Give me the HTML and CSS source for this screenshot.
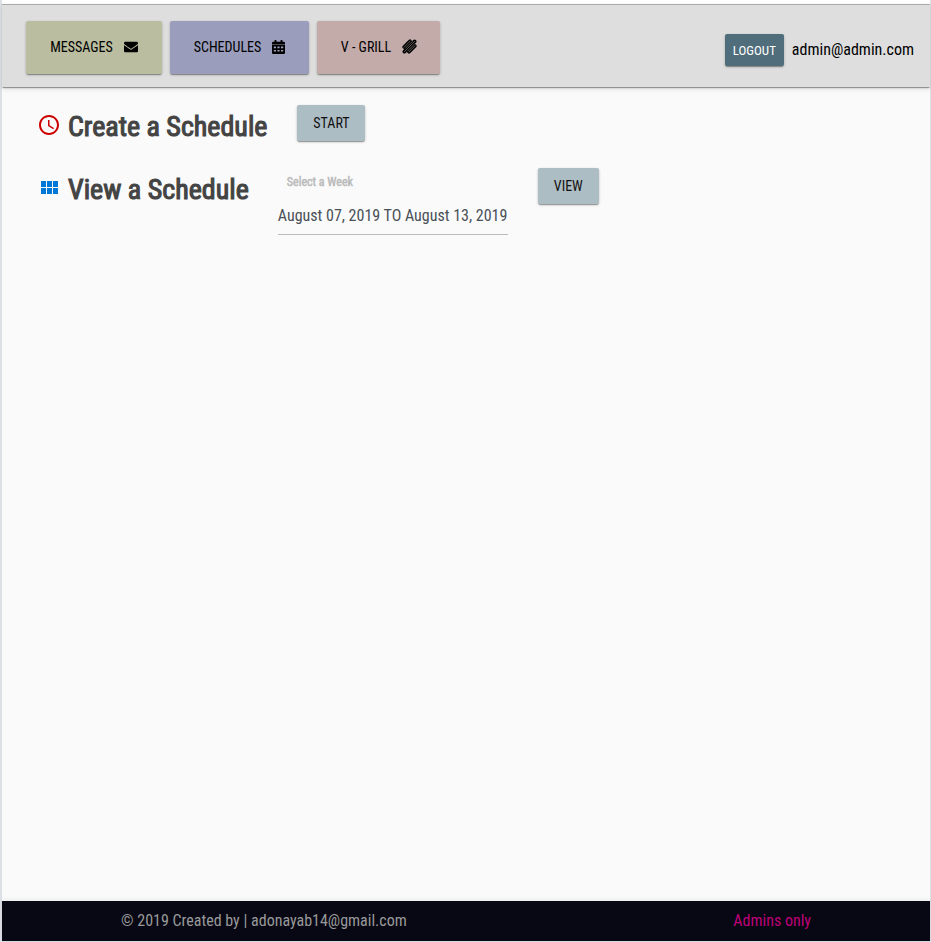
FILE: index.html
```html
<!DOCTYPE html>
<html lang="en">
<head>
<meta charset="utf-8">
<title>Schedules</title>
<link rel="stylesheet" href="styles.css">
</head>
<body>
<div class="page">
  <header class="topbar">
    <nav class="nav">
      <button class="btn nav-btn messages"><span class="label">MESSAGES</span>
        <svg class="icon envelope" viewBox="0 0 512 512"><path d="M502.3 190.8c3.900-3.100 9.700-.2 9.700 4.700V400c0 26.500-21.500 48-48 48H48c-26.500 0-48-21.500-48-48V195.600c0-5 5.700-7.800 9.700-4.700 22.400 17.400 52.100 39.500 154.100 113.600 21.100 15.400 56.700 47.800 92.200 47.600 35.700.3 72-32.800 92.300-47.600 102-74.100 131.600-96.300 154-113.700zM256 320c23.200.4 56.600-29.200 73.400-41.400 132.700-96.300 142.800-104.700 173.400-128.700 5.800-4.500 9.200-11.500 9.200-18.900v-19c0-26.500-21.500-48-48-48H48c-26.500 0-48 21.500-48 48v19c0 7.400 3.400 14.300 9.200 18.900 30.600 23.900 40.700 32.400 173.400 128.700 16.800 12.200 50.200 41.800 73.400 41.400z"/></svg>
      </button>
      <button class="btn nav-btn schedules"><span class="label">SCHEDULES</span>
        <svg class="icon calendar" viewBox="0 0 13 14"><path fill-rule="evenodd" d="M0 4.500V3q0-1.200 1.200-1.200H2.500V.4Q2.500 0 2.900 0h1.200q.4 0 .4.4v1.400h4V.4q0-.4.4-.4h1.200q.4 0 .4.400v1.400h1.300Q13 1.800 13 3v1.500zM0 5h13v7.800Q13 14 11.800 14H1.200Q0 14 0 12.800zM1.800 6.500v1.700h2.200V6.500zM5.400 6.500v1.700h2.200V6.500zM9 6.500v1.700h2.200V6.500zM1.800 9.900v1.700h2.200V9.900zM5.400 9.900v1.700h2.200V9.900zM9 9.900v1.700h2.200V9.900z"/></svg>
      </button>
      <button class="btn nav-btn grill"><span class="label">V - GRILL</span>
        <svg class="icon" viewBox="0 0 15 15"><g fill="none" stroke="#000" stroke-linecap="round"><path stroke-width="3.700" d="M2.200 8 8 2.200M2.400 12.600 12.600 2.400M7 12.800 12.800 7"/><path stroke="#c3abaa" stroke-width=".5" d="M2 8.300 8.200 2M2.200 12.800 12.800 2.200M6.800 13 13 6.800M3.500 9.200 10 2.700M5.700 11.900 12.200 5.400"/></g></svg>
      </button>
    </nav>
    <div class="account">
      <button class="btn logout"><span class="label">LOGOUT</span></button>
      <span class="email">admin@admin.com</span>
    </div>
  </header>
  <main class="content">
    <section class="row">
      <svg class="row-icon clock" viewBox="0 0 24 24"><path d="M11.990 2C6.470 2 2 6.480 2 12s4.470 10 9.990 10C17.520 22 22 17.520 22 12S17.520 2 11.990 2zM12 20c-4.420 0-8-3.580-8-8s3.580-8 8-8 8 3.580 8 8-3.580 8-8 8zM12.500 7H11v6l5.250 3.150.75-1.230-4.500-2.670z"/></svg>
      <h1 class="title">Create a Schedule</h1>
      <button class="btn action start"><span class="label">START</span></button>
    </section>
    <section class="row">
      <svg class="row-icon grid" viewBox="0 0 24 24"><path d="M4 11h5V5H4v6zm0 7h5v-6H4v6zm6 0h5v-6h-5v6zm6 0h5v-6h-5v6zm-6-7h5V5h-5v6zm6-6v6h5V5h-5z"/></svg>
      <h1 class="title">View a Schedule</h1>
      <div class="field">
        <label class="field-label">Select a Week</label>
        <div class="field-value">August 07, 2019 TO August 13, 2019</div>
      </div>
      <button class="btn action view"><span class="label">VIEW</span></button>
    </section>
  </main>
  <footer class="footer">
    <span class="copyright">© 2019 Created by | adonayab14@gmail.com</span>
    <span class="admins">Admins only</span>
  </footer>
</div>
</body>
</html>
```
FILE: styles.css
```css
* { box-sizing: border-box; }
body {
  margin: 0;
  height: 942px;
  padding: 0 1px 1px 2px;
  background: #dde0e6;
  font-family: "Roboto Condensed", Roboto, sans-serif;
  font-stretch: 75%;
  font-size: 16px;
  color: #000;
}
.page {
  height: 941px;
  padding-top: 4px;
  display: flex;
  flex-direction: column;
  background: linear-gradient(#fff 4px, #fafafa 4px);
}
.topbar {
  height: 83px;
  flex: none;
  display: flex;
  justify-content: space-between;
  padding: 16px 16px 0 24px;
  border-top: 1px solid #aaa;
  background: #dedede;
  box-shadow: 0 2px 1px -1px rgba(0,0,0,.28), 0 1px 1px rgba(0,0,0,.1), 0 2px 5px rgba(0,0,0,.12);
}
.nav { display: flex; gap: 8px; }
.btn {
  display: flex;
  align-items: center;
  justify-content: center;
  border: 0;
  border-radius: 2px;
  padding: 0;
  font: inherit;
  font-size: 14px;
  white-space: nowrap;
  box-shadow: 0 2px 1px -1px rgba(0,0,0,.2), 0 1px 1px rgba(0,0,0,.14), 0 1px 3px rgba(0,0,0,.2);
}
.nav-btn { height: 53px; gap: 11px; padding-bottom: 2px; color: #000; }
.messages { width: 136px; background: #babd9f; }
.schedules { width: 139px; background: #9a9dbb; }
.grill { width: 123px; padding-left: 1px; background: #c3abaa; }
.icon { width: 15px; height: 15px; flex: none; }
.envelope { width: 14px; height: 14px; }
.calendar { width: 13px; height: 14px; }
.account { display: flex; align-items: flex-start; gap: 8px; padding-top: 13px; }
.logout { width: 59px; height: 32px; background: #4f6d7a; color: #fff; font-size: 13px; }
.email { line-height: 31px; }
.content { flex: 1; padding: 18px 36px; }
.row { display: flex; align-items: flex-start; height: 63px; }
.row-icon { width: 24px; height: 24px; margin: 8px 6px 0 -1px; flex: none; }
.clock { fill: #cc0000; }
.grid { fill: #0078d7; }
.title {
  margin: 4px 0 0 1px;
  font-size: 28px;
  line-height: 36px;
  font-weight: 400;
  -webkit-text-stroke: 1.100px #444;
  color: #444;
  white-space: nowrap;
}
.action { height: 36px; background: #adbdc4; color: #111; }
.start { width: 68px; margin-left: 30px; }
.view { width: 61px; margin-left: 30px; }
.field { width: 230px; margin-left: 29px; border-bottom: 1px solid #bbb; height: 67px; white-space: nowrap; }
.field-label { display: block; padding: 5px 9px 0; font-size: 12px; line-height: 18px; -webkit-text-stroke: .5px #bbb; color: #bbb; }
.field-value { margin-top: 15px; line-height: 20px; color: #495057; }
.footer {
  height: 40px;
  flex: none;
  display: flex;
  justify-content: space-between;
  padding: 0 119px;
  background: #080814;
  line-height: 39px;
  box-shadow: 0 -1px 5px rgba(0,0,0,.08);
}
.copyright { color: #999; }
.admins { color: #bf0078; }
```
